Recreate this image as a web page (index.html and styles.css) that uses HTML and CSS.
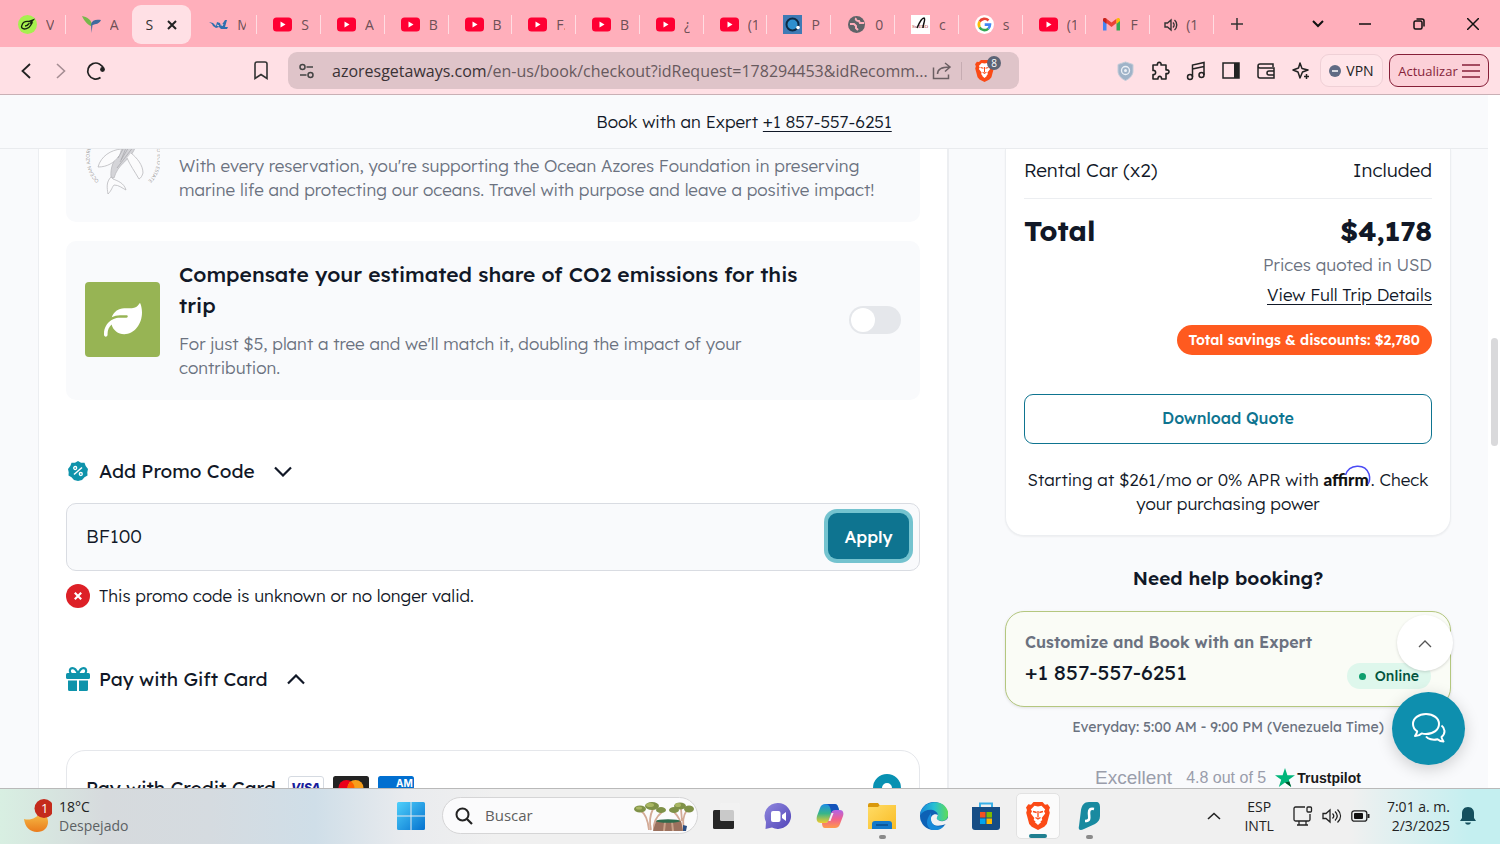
FILE: index.html
```html
<!DOCTYPE html>
<html lang="en">
<head>
<meta charset="utf-8">
<title>Checkout</title>
<link rel="stylesheet" href="styles.css">
</head>
<body>
<svg class="defs" aria-hidden="true">
  <defs>
    <symbol id="yt" viewBox="0 0 19 14"><rect width="19" height="14" rx="3.5" fill="#ff0033"/><path d="M7.5 4l5 3-5 3z" fill="#fff"/></symbol>
    <symbol id="brave" viewBox="0 0 24 28"><path d="M7.500 0h9l2.500 2.700 2.700-.4 2.300 3.200-1 2.500.8 2.800-3 11.200-2.500 2.800L12 28l-6.300-3.200L3.200 22 .2 10.800 1 8 0 5.500l2.300-3.200 2.700.4z" fill="#fb4a16"/><path d="M12 4.500l3.500-.7 3.700 3.700-1.200 1.800 1.200 2.200-3.500 4.500.6 2-4.300 3.500-4.300-3.500.6-2-3.500-4.500L6 9.300 4.800 7.500l3.700-3.700zM8.700 20l3.300-1.600 3.300 1.600-3.300 3z" fill="#fff"/><path d="M7 9.500l3.700 1M17 9.500l-3.700 1M12 9v6.500M9.500 15.500L12 17l2.500-1.500" stroke="#fb4a16" stroke-width="1.300" fill="none"/></symbol>
    <linearGradient id="win" x1="0" y1="0" x2="1" y2="1"><stop offset="0" stop-color="#4fd0fb"/><stop offset="1" stop-color="#0572cf"/></linearGradient>
    <linearGradient id="moon" x1="0" y1="0" x2="0" y2="1"><stop offset="0" stop-color="#f7c24a"/><stop offset="1" stop-color="#ea7b1c"/></linearGradient>
    <linearGradient id="edge1" x1="0" y1="0" x2="1" y2="0"><stop offset="0" stop-color="#1787d9"/><stop offset=".5" stop-color="#27c0d4"/><stop offset="1" stop-color="#5fdc57"/></linearGradient>
    <linearGradient id="cop1" x1="0" y1="0" x2="0" y2="1"><stop offset="0" stop-color="#1d8ee8"/><stop offset=".5" stop-color="#37b58a"/><stop offset="1" stop-color="#f3cc2c"/></linearGradient>
    <linearGradient id="cop2" x1="0" y1="0" x2="0" y2="1"><stop offset="0" stop-color="#b063e8"/><stop offset=".5" stop-color="#f0608e"/><stop offset="1" stop-color="#ff9b4a"/></linearGradient>
    <linearGradient id="fold" x1="0" y1="0" x2="1" y2="1"><stop offset="0" stop-color="#ffdc66"/><stop offset="1" stop-color="#f9bc25"/></linearGradient>
    <linearGradient id="chat" x1="0" y1="0" x2="1" y2="1"><stop offset="0" stop-color="#9088de"/><stop offset="1" stop-color="#5144b8"/></linearGradient>
  </defs>
</svg>

<header class="tabstrip">
  <div class="tabs" role="tablist">
    <div class="tab"><svg class="fav" viewBox="0 0 19 19"><circle cx="9.500" cy="9.500" r="9.500" fill="#a6f04e"/><path d="M4 10c1-3 4-4 7-3.500L15 5l-2.500 3 1.500 0-1.500 2.500C11 13.500 6 15 4 13c-1-1-.5-2 0-3zM7 11c2 0 3-1 4-2.500" stroke="#16240f" stroke-width="1.400" fill="none"/></svg><span class="tab-title">V</span></div>
    <div class="tab plain"><svg class="fav" viewBox="0 0 19 19"><path d="M0 1c5 1 9 4 9.500 7L9 11C6 10 2 6 0 1z" fill="#78b74a"/><path d="M19 5c-5-1-9 0-10 4l.5 9 1-8c3-1 7-1 8.500-5z" fill="#3f6a9e"/></svg><span class="tab-title">A</span></div>
    <div class="tab active"><span class="tab-title">S</span><button class="bare" aria-label="Close tab"><svg width="10" height="10" viewBox="0 0 10 10"><path d="M1 1l8 8M9 1L1 9" stroke="#222" stroke-width="2"/></svg></button></div>
    <div class="tab"><svg class="fav" viewBox="0 0 19 19"><path d="M0 7l4 1 3 3 1-4 3 1 1 3 4-6 2 0-2 7h3l-1 2h-6l-2-2-3 1-3-2-1-2z" fill="#2f6fae"/><path d="M8 10l2 1M13 11l1-2" stroke="#ffd5dc"/></svg><span class="tab-title">M</span></div>
    <div class="tab"><svg class="fav"><use href="#yt"/></svg><span class="tab-title">S</span></div>
    <div class="tab"><svg class="fav"><use href="#yt"/></svg><span class="tab-title">A</span></div>
    <div class="tab"><svg class="fav"><use href="#yt"/></svg><span class="tab-title">B</span></div>
    <div class="tab"><svg class="fav"><use href="#yt"/></svg><span class="tab-title">B</span></div>
    <div class="tab"><svg class="fav"><use href="#yt"/></svg><span class="tab-title">F.</span></div>
    <div class="tab"><svg class="fav"><use href="#yt"/></svg><span class="tab-title">B</span></div>
    <div class="tab"><svg class="fav"><use href="#yt"/></svg><span class="tab-title">¿</span></div>
    <div class="tab"><svg class="fav"><use href="#yt"/></svg><span class="tab-title">(1</span></div>
    <div class="tab"><svg class="fav" viewBox="0 0 19 19"><rect width="19" height="19" fill="#3f7ab5"/><circle cx="9.500" cy="9.500" r="6" fill="#2e8fce" stroke="#0d2a45" stroke-width="2"/><circle cx="15" cy="12.500" r="1.800" fill="#fff"/></svg><span class="tab-title">P</span></div>
    <div class="tab"><svg class="fav" viewBox="0 0 19 19"><circle cx="9.500" cy="9.500" r="8.500" fill="#5f6368"/><path d="M3 9h4l2 2v2l2 2M9 3c-1 2 1 3 3 3l1 2h4" stroke="#ffafbb" stroke-width="2" fill="none"/></svg><span class="tab-title">0</span></div>
    <div class="tab"><svg class="fav" viewBox="0 0 19 19"><rect width="19" height="19" fill="#fff"/><text x="1" y="13" class="scielo">SciELO</text><path d="M6 13C9 6 11 3 13 3c2 1-1 6-1 10" stroke="#111" stroke-width="1.500" fill="none"/></svg><span class="tab-title">c</span></div>
    <div class="tab"><svg class="fav" viewBox="0 0 19 19"><circle cx="9.500" cy="9.500" r="9.500" fill="#fff"/><g fill="none" stroke-width="2.600"><path d="M13.500 5.500A5.600 5.600 0 0 0 4.600 6.700" stroke="#ea4335"/><path d="M4.600 6.700a5.600 5.600 0 0 0 0 5.600" stroke="#fbbc05"/><path d="M4.600 12.300a5.600 5.600 0 0 0 8.700 1.300" stroke="#34a853"/><path d="M13.300 13.600a5.600 5.600 0 0 0 1.700-4H9.700" stroke="#4285f4"/></g></svg><span class="tab-title">s</span></div>
    <div class="tab"><svg class="fav"><use href="#yt"/></svg><span class="tab-title">(1</span></div>
    <div class="tab"><svg class="fav" viewBox="0 0 19 19"><path d="M1 5v10.500h3.500V8z" fill="#4285f4"/><path d="M18 5v10.500h-3.500V8z" fill="#34a853"/><path d="M1 5c0-2 2-2.500 3.500-1.300l5 3.800 5-3.800L14.500 8l-5 4-5-4z" fill="#ea4335"/><path d="M14.500 3.700C16 2.500 18 3 18 5v1l-3.500 3z" fill="#fbbc04"/><path d="M1 5c0-2 2-2.500 3.500-1.300V9L1 6z" fill="#c5221f"/></svg><span class="tab-title">F</span></div>
    <div class="tab sound"><svg class="spk" viewBox="0 0 14 14"><path d="M1 5h2.500L7 2v10L3.500 9H1z" fill="none" stroke="#333" stroke-width="1.400"/><path d="M9 4.500c1.500 1.500 1.500 3.500 0 5M10.500 2c3 2.500 3 7.500 0 10" fill="none" stroke="#333" stroke-width="1.400"/></svg><span class="tab-title">(1</span></div>
  </div>
  <div class="window-controls">
    <button class="bare newtab" aria-label="New tab"><svg width="14" height="14" viewBox="0 0 14 14"><path d="M7 1v12M1 7h12" stroke="#333" stroke-width="1.500"/></svg></button>
    <button class="bare search-tabs" aria-label="Search tabs"><svg width="12" height="8" viewBox="0 0 12 8"><path d="M1 1l5 5 5-5" stroke="#111" stroke-width="2" fill="none"/></svg></button>
    <button class="bare win" aria-label="Minimize"><svg width="12" height="12" viewBox="0 0 12 12"><path d="M0 6h12" stroke="#111" stroke-width="1.500"/></svg></button>
    <button class="bare win" aria-label="Restore"><svg width="12" height="12" viewBox="0 0 12 12"><rect x="1" y="3" width="8" height="8" rx="1.500" fill="none" stroke="#111" stroke-width="1.500"/><path d="M3.500 1H9a2 2 0 0 1 2 2v5.500" fill="none" stroke="#111" stroke-width="1.500"/></svg></button>
    <button class="bare win" aria-label="Close"><svg width="12" height="12" viewBox="0 0 12 12"><path d="M0 0l12 12M12 0L0 12" stroke="#111" stroke-width="1.500"/></svg></button>
  </div>
</header>

<nav class="toolbar">
  <button class="bare nav" aria-label="Back"><svg width="10" height="16" viewBox="0 0 10 16"><path d="M9 1L1.500 8 9 15" stroke="#222" stroke-width="1.800" fill="none"/></svg></button>
  <button class="bare nav" aria-label="Forward"><svg width="10" height="16" viewBox="0 0 10 16"><path d="M1 1l7.500 7L1 15" stroke="#a58d93" stroke-width="1.600" fill="none"/></svg></button>
  <button class="bare nav" aria-label="Reload"><svg width="20" height="20" viewBox="0 0 20 20"><path d="M14.500 16.500A8 8 0 1 1 17.500 8" stroke="#222" stroke-width="1.700" fill="none"/><circle cx="16.500" cy="8.500" r="2.400" fill="#222"/></svg></button>
  <button class="bare bookmark" aria-label="Bookmark"><svg width="14" height="19" viewBox="0 0 14 19"><path d="M1 3a2 2 0 0 1 2-2h8a2 2 0 0 1 2 2v14.500L7 13.500l-6 4z" stroke="#333" stroke-width="1.600" fill="none"/></svg></button>
  <div class="address">
    <svg width="16" height="16" viewBox="0 0 16 16" fill="none" stroke="#444" stroke-width="1.500"><circle cx="3.500" cy="4" r="2.500"/><path d="M7.500 4H14M1 12h6.500"/><circle cx="11.500" cy="12" r="2.500"/></svg>
    <span class="url"><b>azoresgetaways.com</b>/en-us/book/checkout?idRequest=178294453&amp;idRecomm...</span>
    <button class="bare" aria-label="Share"><svg width="20" height="18" viewBox="0 0 20 18" fill="none" stroke="#6b5f63" stroke-width="1.500"><path d="M1.500 5.500v11h15v-4M5.500 12c0-5 4-7 12-7M13 1l5 4-5 4.500"/></svg></button>
    <span class="address-line"></span>
    <button class="bare shield" aria-label="Brave Shields"><svg width="19" height="22"><use href="#brave"/></svg><span class="count">8</span></button>
  </div>
  <div class="extensions">
    <button class="bare ext" aria-label="Tracker guard"><svg width="17" height="20" viewBox="0 0 17 20"><path d="M8.500 1L16 3.500V10c0 4-3 7.500-7.500 9.500C4 17.500 1 14 1 10V3.500z" fill="#9fb3c8" stroke="#c3ccd8"/><circle cx="8.500" cy="9.500" r="4" fill="none" stroke="#edf1f6" stroke-width="1.300"/><circle cx="8.500" cy="9.500" r="1.500" fill="#edf1f6"/></svg></button>
    <button class="bare ext" aria-label="Extensions"><svg width="20" height="20" viewBox="0 0 20 20"><path d="M2 4h4.500c-1-3.500 4.500-3.500 3.500 0h5v5c4-1 4 4.500 0 3.500V18h-4.500c.5-3.500-4-3.500-3.500 0H2v-4.500c3.500 1 3.500-5 0-4z" fill="none" stroke="#222" stroke-width="1.600" stroke-linejoin="round"/></svg></button>
    <button class="bare ext" aria-label="Music"><svg width="20" height="20" viewBox="0 0 20 20" fill="none" stroke="#222" stroke-width="1.500"><circle cx="4" cy="16" r="2.500"/><circle cx="15.500" cy="14" r="2.500"/><path d="M6.500 16V4L18 1.500V14M6.500 8L18 5.500"/></svg></button>
    <button class="bare ext" aria-label="Side panel"><svg width="18" height="17" viewBox="0 0 18 17"><rect x="1" y="1" width="16" height="15" fill="none" stroke="#222" stroke-width="1.500"/><path d="M12 1h5v15h-5z" fill="#222"/></svg></button>
    <button class="bare ext" aria-label="Wallet"><svg width="18" height="18" viewBox="0 0 18 18" fill="none" stroke="#222" stroke-width="1.500"><path d="M16 5V2H3a2 2 0 0 0 0 4h14v10H3a2 2 0 0 1-2-2V4"/><path d="M17 9h-5a2 2 0 0 0 0 4h5"/></svg></button>
    <button class="bare ext" aria-label="Leo AI"><svg width="18" height="18" viewBox="0 0 18 18" fill="none" stroke="#222" stroke-width="1.500" stroke-linejoin="round"><path d="M8 1l2 5.500L16 8l-5.500 2L8 16l-2-6L1 8l5.500-2z"/><path d="M14.500 12v5M12 14.500h5"/></svg></button>
  </div>
  <button class="vpn"><svg width="12" height="12" viewBox="0 0 12 12"><circle cx="6" cy="6" r="6" fill="#5f6b84"/><path d="M3 6h6" stroke="#fff" stroke-width="1.500"/></svg>VPN</button>
  <button class="update">Actualizar<svg width="18" height="14" viewBox="0 0 18 14"><path d="M0 1h18M0 7h18M0 13h18" stroke="#861f38" stroke-width="1.600"/></svg></button>
</nav>

<div class="viewport">
  <div class="site">
    <div class="notice">Book with an Expert&nbsp;<a href="tel:+18575576251">+1 857-557-6251</a></div>
    <div class="scroll">
      <div class="columns">
        <main class="panel">
          <section class="addon first">
            <svg class="whale" width="75" height="75" viewBox="0 0 75 75">
              <path id="arcL" d="M14 61A34 34 0 0 1 14 14" fill="none"/><path id="arcR" d="M64 14A35 35 0 0 1 46 71" fill="none"/>
              <text><textPath href="#arcL">OCEAN AZORES</textPath></text>
              <text><textPath href="#arcR">BLANCO ECO ESTATE</textPath></text>
              <path d="M42 8c10 4 12 14 6 24-5 9-15 12-19 26l-3-1c-1-9 3-18 8-24 5-7 9-14 8-25z" fill="#d4d4d8" stroke="#b5b5b9" stroke-width=".7"/>
              <path d="M36 29c-10 1-20 7-23 18 9 0 16-4 21-11M46 33c6 5 12 12 12 20-1 3-2 5-4 6-4-7-9-14-12-21M26 57c-5 5-4 11-3 17 4-4 4-7 6-9 5 0 8 3 12 5-2-7-8-9-13-11z" fill="#fbfbfc" stroke="#b9b9bd" stroke-width=".8"/>
              <path d="M45 18l-9 22M48 20l-13 22M49 26l-17 22M42 22l-9 16" stroke="#a5a5a9" stroke-width=".7" fill="none"/>
            </svg>
            <div class="addon-body"><p>With every reservation, you're supporting the Ocean Azores Foundation in preserving marine life and protecting our oceans. Travel with purpose and leave a positive impact!</p></div>
          </section>

          <section class="addon">
            <div class="leaf"><svg width="38" height="38" viewBox="0 0 512 512"><path fill="#fff" d="M272 96c-78.600 0-145.100 51.500-167.700 122.500c33.600-17 71.500-26.500 111.700-26.500h88c8.800 0 16 7.200 16 16s-7.200 16-16 16H216c-16.600 0-32.700 1.900-48.200 5.400c-25.900 5.900-50 16.400-71.400 30.700C38.300 298.800 0 364.900 0 440v16c0 13.300 10.700 24 24 24s24-10.700 24-24V440c0-48.700 20.700-92.500 53.800-123.200C121.600 392.300 190.300 448 272 448l1 0c132.100-.7 239-130.900 239-291.400c0-42.600-7.500-83.100-21.100-119.600c-2.600-6.900-12.700-6.600-16.200-.1C455.900 72.100 418.700 96 376 96z"/></svg></div>
            <div class="addon-body">
              <h2><label for="co2">Compensate your estimated share of CO2 emissions for this trip</label></h2>
              <p>For just $5, plant a tree and we'll match it, doubling the impact of your contribution.</p>
            </div>
            <input class="switch" type="checkbox" role="switch" id="co2">
          </section>

          <button class="toggle-head promo-head" id="promo-label"><span class="head-icon"><svg width="20" height="20" viewBox="0 0 20 20"><path d="M10 0l3 1.700 3.500.1 1.200 3.200L20 8l-.7 3.200.2 3.300-3 1.700L14 19l-4 1-4-1-2.500-2.800-3-1.700.2-3.300L0 8l2.300-3 1.200-3.200L7 1.700z" fill="#0e93ab"/><path d="M6 13.500l8-7" stroke="#fff" stroke-width="1.500"/><g fill="none" stroke="#fff" stroke-width="1.300"><circle cx="7.200" cy="7" r="1.500"/><circle cx="12.800" cy="13" r="1.500"/></g></svg></span>Add Promo Code<svg class="caret" width="18" height="11" viewBox="0 0 18 11"><path d="M1 1.500l8 8 8-8" stroke="#111827" stroke-width="2.200" fill="none"/></svg></button>
          <div class="promo-field">
            <input type="text" value="BF100" aria-labelledby="promo-label">
            <button class="apply">Apply</button>
          </div>
          <p class="error"><svg width="24" height="24" viewBox="0 0 24 24"><circle cx="12" cy="12" r="12" fill="#dd2027"/><path d="M8.800 8.800l6.400 6.400M15.200 8.800l-6.400 6.400" stroke="#fff" stroke-width="2.200"/></svg>This promo code is unknown or no longer valid.</p>

          <button class="toggle-head gift-head"><span class="head-icon"><svg width="24" height="24" viewBox="0 0 24 24"><g fill="#0e93ab"><rect y="6" width="24" height="6" rx="1.500"/><path d="M2 13.500h9V24H3.500A1.500 1.500 0 0 1 2 22.500zM13 13.500h9v9a1.500 1.500 0 0 1-1.500 1.500H13z"/></g><path d="M12 7C10 2 8 1.200 6.500 1.200 3.500 1.200 3 5 5 6.500M12 7c2-5 4-5.800 5.500-5.800 3 0 3.500 3.800 1.500 5.300" stroke="#0e93ab" stroke-width="2.200" fill="none"/></svg></span>Pay with Gift Card<svg class="caret" width="18" height="11" viewBox="0 0 18 11"><path d="M1 9.500l8-8 8 8" stroke="#111827" stroke-width="2.200" fill="none"/></svg></button>

          <section class="method">
            <label for="credit">Pay with Credit Card</label>
            <svg width="36" height="24" viewBox="0 0 36 24"><rect x=".5" y=".5" width="35" height="23" rx="2.500" fill="#fff" stroke="#d5dae1"/><text x="3" y="16" class="visa">VISA</text></svg>
            <svg width="36" height="24" viewBox="0 0 36 24"><rect width="36" height="24" rx="2.500" fill="#232323"/><circle cx="13.500" cy="12" r="8" fill="#eb001b"/><circle cx="22.500" cy="12" r="8" fill="#f79e1b"/><path d="M18 5.400a8 8 0 0 1 0 13.200 8 8 0 0 1 0-13.200z" fill="#ff5f00"/></svg>
            <svg width="36" height="24" viewBox="0 0 36 24"><rect width="36" height="24" rx="2.500" fill="#016fd0"/><text x="18" y="11" class="amex">AM</text><text x="18" y="21" class="amex">EX</text></svg>
            <input class="radio" type="radio" name="method" id="credit" checked>
          </section>
        </main>

        <aside class="side">
          <section class="summary">
            <div class="line"><span>Rental Car (x2)</span><span>Included</span></div>
            <div class="total"><strong>Total</strong><strong>$4,178</strong></div>
            <div class="sub">Prices quoted in USD</div>
            <a class="details" href="#details">View Full Trip Details</a>
            <span class="savings">Total savings &amp; discounts: $2,780</span>
            <button class="download">Download Quote</button>
            <p class="affirm-note">Starting at $261/mo or 0% APR with <span class="affirm">affirm<svg width="28" height="22" viewBox="0 0 28 22"><path d="M1.500 10C5-1 21-2 25 9c1 3.500 1 7-1 10" stroke="#4a4af4" stroke-width="1.500" fill="none"/></svg></span>. Check your purchasing power</p>
          </section>
          <h3>Need help booking?</h3>
          <section class="expert">
            <div class="expert-title">Customize and Book with an Expert</div>
            <div class="expert-row"><span class="phone">+1 857-557-6251</span><span class="online"><i></i>Online</span></div>
          </section>
          <p class="hours">Everyday: 5:00 AM - 9:00 PM (Venezuela Time)</p>
          <div class="trust"><span class="rating">Excellent</span><span class="score">4.8 out of 5</span><span class="tp"><svg width="20" height="20" viewBox="0 0 20 20"><path d="M10 0l2.400 7.300H20l-6.200 4.500L16.200 19 10 14.600 3.800 19l2.400-7.200L0 7.300h7.600z" fill="#00b67a"/><path d="M10 14.600l4.300-1.200L16.200 19z" fill="#005128"/></svg>Trustpilot</span></div>
        </aside>
      </div>
    </div>
    <div class="floating">
      <button class="to-top" aria-label="Back to top"><svg width="14" height="9" viewBox="0 0 14 9"><path d="M1 8l6-6 6 6" stroke="#555" stroke-width="1.300" fill="none"/></svg></button>
      <button class="chat" aria-label="Chat"><svg width="36" height="34" viewBox="0 0 36 34" fill="none" stroke="#fff" stroke-width="2" stroke-linejoin="round"><path d="M15 2c7.500 0 13 4.400 13 10s-5.500 10-13 10c-1.500 0-3-.2-4.300-.6C9 23 7 24 4 24c1-1.500 2-3 2.200-4.600C3.600 17.600 2 15 2 12 2 6.400 7.500 2 15 2z"/><path d="M30.500 13.500c3.500 2.500 4.500 8 0 11.500.2 1.700 1 3 2 4.500-2.500 0-4.500-1-6-2.300C22 28.500 17 27 15 24.500"/></svg></button>
    </div>
  </div>
  <div class="scrollbar"><div class="thumb"></div></div>
</div>

<footer class="taskbar">
  <div class="weather">
    <svg width="30" height="34" viewBox="0 0 30 34"><path d="M2 20c6 2 13-1 17-7 10 3 10 20-4 20-7 0-12-5-13-13z" fill="url(#moon)"/><circle cx="22" cy="9.500" r="9.500" fill="#c42b1c"/><text x="19" y="14" class="badge-num">1</text></svg>
    <div><div>18°C</div><div class="muted">Despejado</div></div>
  </div>
  <div class="apps">
    <button class="bare app" aria-label="Start"><svg width="28" height="28" viewBox="0 0 28 28" fill="url(#win)"><path d="M0 1.500A1.500 1.500 0 0 1 1.500 0h12v13.500H0zM14.500 0h12A1.500 1.500 0 0 1 28 1.500v12H14.500zM0 14.500h13.500V28h-12A1.500 1.500 0 0 1 0 26.500zM14.500 14.500H28v12a1.500 1.500 0 0 1-1.500 1.500h-12z"/></svg></button>
    <div class="search">
      <svg width="18" height="18" viewBox="0 0 18 18"><circle cx="7.500" cy="7.500" r="6" fill="none" stroke="#222" stroke-width="2"/><path d="M12 12l5 5" stroke="#222" stroke-width="2.200"/></svg>
      <input type="text" placeholder="Buscar" aria-label="Buscar">
      <svg width="60" height="30" viewBox="0 0 60 30"><path d="M7 10c5 3 7 10 8 19M19 8c-3 6-4 13-2 21M28 11c-6 5-9 11-8 18M40 11c5 5 7 9 8 18M53 9c-5 7-4 13-3 20M47 8l1 12" stroke="#d3aa96" stroke-width="1.800" fill="none"/><g fill="#7f9148"><ellipse cx="6" cy="8" rx="6" ry="3.500"/><ellipse cx="18" cy="5" rx="7" ry="4"/><ellipse cx="27" cy="9" rx="5" ry="3"/><ellipse cx="40" cy="9" rx="5" ry="3"/><ellipse cx="46" cy="5" rx="6" ry="3.500"/><ellipse cx="55" cy="8" rx="5" ry="3.500"/></g><g fill="#a9b763"><ellipse cx="16" cy="4" rx="4" ry="2"/><ellipse cx="44" cy="4" rx="3" ry="2"/><ellipse cx="5" cy="7" rx="3" ry="1.500"/></g><path d="M22 20h25l2 10H19z" fill="#9b715e"/><path d="M31 21l-1 9M38 21l1 9" stroke="#caa28a" stroke-width="2"/><ellipse cx="34" cy="20" rx="12" ry="1.800" fill="#2f6b4c"/><path d="M49 24l4 1-1 5h-3z" fill="#2b4f83"/></svg>
    </div>
    <button class="bare app" aria-label="Task view"><svg width="28" height="28" viewBox="0 0 28 28"><rect x="1" y="8" width="21" height="19" rx="1.500" fill="#262626"/><rect x="8" y="1" width="20" height="18" rx="1.500" fill="#f3f3f3" fill-opacity=".8"/></svg></button>
    <button class="bare app" aria-label="Chat"><svg width="28" height="28" viewBox="0 0 28 28"><path d="M14 1a13 13 0 1 1-6 24.500L1.500 27 2 20A13 13 0 0 1 14 1z" fill="url(#chat)"/><rect x="7" y="9" width="9.500" height="11" rx="2" fill="#fff"/><path d="M18 13l4-3v9l-4-3z" fill="#fff"/></svg></button>
    <button class="bare app" aria-label="Copilot"><svg width="28" height="28" viewBox="0 0 28 28"><path d="M9 2h10c2 0 3 2 3.500 4l.5 2h-4c-2 0-3 2-4 6-1 4-2 7-5 7H5c-4 0-5-3-4-7L4 6c1-3 3-4 5-4z" fill="url(#cop1)"/><path d="M19 26H9c-2 0-3-2-3-5h4c2 0 3-3 4-7 1-4 2-6 5-6h5c3 0 4 3 3 6l-3 8c-1 3-3 4-5 4z" fill="url(#cop2)"/><path d="M9 2h10c2 0 3 2 4 6h-4c-2 0-3 1-4 3 0-4-1-9-6-9z" fill="#1453ba"/><path d="M15.500 11h2l-3 8h-2z" fill="#f0f1f2"/></svg></button>
    <button class="bare app open" aria-label="File Explorer"><svg width="28" height="28" viewBox="0 0 28 28"><path d="M0 3a2 2 0 0 1 2-2h8l3 4H0z" fill="#d9980c"/><path d="M0 5h10l2-2h16v24H0z" fill="url(#fold)"/><path d="M4 27v-5a3 3 0 0 1 3-3h14a3 3 0 0 1 3 3v5z" fill="#1479ca"/><path d="M8 23h12" stroke="#0b4d8a" stroke-width="1.500"/></svg></button>
    <button class="bare app" aria-label="Edge"><svg width="28" height="28" viewBox="0 0 28 28"><circle cx="14" cy="14" r="14" fill="#0d61b5"/><path d="M0 13C1 3 11-2 20 1c6 2 9 8 8 13-1 5-6 6-10 4-2-1-1-3 0-5-1-6-12-8-18 0z" fill="url(#edge1)"/><path d="M18 13c-4-2-8 1-7 6 1 5 7 6 15 3 2-2 2-4 2-6-3 4-7 4-10 2-2-1-1-3 0-5z" fill="#f0f1f2"/><path d="M11 17c0 6 6 9 13 7-2 3-7 5-12 4C6 26 5 18 11 11z" fill="#1789d8"/></svg></button>
    <button class="bare app" aria-label="Store"><svg width="28" height="28" viewBox="0 0 28 28"><path d="M8 7V1.500h12V7" stroke="#39b0e8" stroke-width="2" fill="none"/><path d="M0 5h28v20a3 3 0 0 1-3 3H3a3 3 0 0 1-3-3z" fill="#164d85"/><path d="M8 10h5.500v5.500H8z" fill="#f25022"/><path d="M14.500 10H20v5.500h-5.500z" fill="#7fba00"/><path d="M8 16.500h5.500V22H8z" fill="#00a4ef"/><path d="M14.500 16.500H20V22h-5.500z" fill="#ffb900"/></svg></button>
    <button class="bare app current" aria-label="Brave"><svg width="24" height="28"><use href="#brave"/></svg></button>
    <button class="bare app open" aria-label="Surfshark"><svg width="22" height="28" viewBox="0 0 22 28"><path d="M11 0h7c3 0 4 2 4 5v9c0 4-2 6-5 8L6 27c-4 2-6 1-5-3L3 8c1-5 3-8 8-8z" fill="#198aa0"/><path d="M16 7c-4-1-5 1-5 4 0 4 2 8-4 8" stroke="#fff" stroke-width="2.600" fill="none"/></svg></button>
  </div>
  <div class="tray">
    <svg width="14" height="8" viewBox="0 0 14 8"><path d="M1 7l6-5.500L13 7" stroke="#222" stroke-width="1.600" fill="none"/></svg>
    <div class="lang">ESP<br>INTL</div>
    <div class="status">
      <svg width="20" height="20" viewBox="0 0 20 20" fill="none" stroke="#222" stroke-width="1.300"><path d="M12 1H2.500A1.500 1.500 0 0 0 1 2.500v11A1.500 1.500 0 0 0 2.500 15h13a1.500 1.500 0 0 0 1.500-1.500V8M6 15v4M13 15v4M4 19h11"/><rect x="14" y="1" width="4.500" height="5" rx="1"/></svg>
      <svg width="20" height="16" viewBox="0 0 20 16" fill="none" stroke="#222" stroke-width="1.300"><path d="M1 5.500h3L8 2v12l-4-3.500H1z"/><path d="M10.500 5.500c1.500 1.500 1.500 3.500 0 5M13 3.500c3 3 3 6 0 9M15.500 1.500c4 4 4 9 0 13"/></svg>
      <svg width="19" height="12" viewBox="0 0 19 12"><rect x=".8" y=".8" width="15" height="10.400" rx="2.500" fill="none" stroke="#222" stroke-width="1.300"/><rect x="3" y="3" width="9" height="6" rx="1" fill="#111"/><path d="M17.500 4v4" stroke="#222" stroke-width="2"/></svg>
    </div>
    <div class="clock">7:01 a. m.<br>2/3/2025</div>
    <svg width="16" height="18" viewBox="0 0 16 18"><path d="M8 0c4 0 6 3 6 6v5l2 3H0l2-3V6c0-3 2-6 6-6zM5 15.500h6c-1 3-5 3-6 0z" fill="#15505e"/></svg>
  </div>
</footer>
</body>
</html>
```
FILE: styles.css
```css
* { box-sizing: border-box; }
body {
  margin: 0;
  height: 100vh;
  display: flex;
  flex-direction: column;
  overflow: hidden;
  font-family: "Open Sans", sans-serif;
  color: #222;
}
p, h2, h3 { margin: 0; }
svg { flex: none; display: block; }
button, input { font: inherit; color: inherit; }
.defs { position: absolute; width: 0; height: 0; }
.bare {
  border: 0;
  padding: 0;
  background: none;
  display: flex;
  align-items: center;
  justify-content: center;
}

/* Tab strip */
.tabstrip { display: flex; background: #ffafbb; height: 47px; flex: none; }
.tabs {
  display: grid;
  grid-auto-flow: column;
  grid-auto-columns: minmax(0, 1fr);
  flex: 1;
  min-width: 0;
  padding: 2px 0 0 2px;
  align-items: center;
}
.tab {
  height: 19px;
  display: flex;
  align-items: center;
  gap: 9px;
  padding: 0 11px 0 16px;
  border-right: 1px solid #ffdce2;
  font-size: 14px;
  color: #6e5056;
}
.fav { width: 19px; height: 19px; }
.spk { width: 14px; height: 14px; }
.tab-title { flex: none; max-width: 9px; overflow: hidden; white-space: nowrap; }
.tab.plain { border-color: transparent; }
.tab.sound { padding-left: 14px; gap: 8px; }
.tab.sound .tab-title { max-width: 14px; }
.tab.active {
  height: 39px;
  margin: 0 2px;
  border: 0;
  border-radius: 9px;
  background: #ffe0e5;
  padding: 0 14px;
  justify-content: space-between;
  color: #333;
}
.scielo { font: 5px "Liberation Serif", serif; fill: #b03030; }
.window-controls { display: flex; width: 286px; flex: none; }
.newtab { width: 46px; }
.search-tabs { width: 40px; margin-left: auto; }
.win { width: 54px; }

/* Toolbar */
.toolbar {
  display: flex;
  align-items: center;
  flex: none;
  height: 48px;
  padding: 0 11px 0 8px;
  background: #ffe0e5;
  border-bottom: 1px solid #c9b0b5;
}
.nav { width: 35px; height: 34px; }
.bookmark { width: 40px; height: 34px; margin: 0 7px 0 128px; }
.address {
  flex: 1;
  min-width: 0;
  display: flex;
  align-items: center;
  height: 37px;
  padding: 0 18px 0 11px;
  border-radius: 9px;
  background: #dfc4c9;
}
.url { flex: 1; min-width: 0; margin: 0 4px 0 17px; font-size: 16px; color: #67595d; white-space: nowrap; overflow: hidden; }
.url b { font-weight: 400; color: #3a3235; }
.address-line { width: 1px; height: 18px; background: #c6acb2; margin: 0 13px 0 9px; }
.shield { position: relative; width: 26px; justify-content: flex-start; }
.count {
  position: absolute;
  left: 12px;
  top: -4px;
  width: 14px;
  height: 14px;
  border-radius: 50%;
  background: #5d6475;
  color: #fff;
  font-size: 10px;
  line-height: 14px;
}
.extensions { display: flex; margin: 0 2px 0 89px; }
.ext { width: 35px; height: 34px; }
.vpn, .update {
  display: flex;
  align-items: center;
  justify-content: center;
  gap: 5px;
  height: 33px;
  padding: 0;
  border-radius: 9px;
  font-size: 14px;
}
.vpn { width: 63px; background: #ffe5e9; border: 1px solid #efd0d6; margin-right: 6px; }
.update { width: 100px; background: #fcd0d8; border: 1px solid #861f38; color: #861f38; font-size: 13px; gap: 4px; }

/* Web page */
.viewport {
  flex: 1;
  min-height: 0;
  display: flex;
  font-family: Lexend, Inter, sans-serif;
  font-weight: 300;
  color: #111827;
}
.site { position: relative; flex: 1; min-width: 0; display: flex; flex-direction: column; background: #f9fafc; }
.notice {
  flex: none;
  display: flex;
  justify-content: center;
  align-items: center;
  height: 54px;
  border-bottom: 1px solid #e9ebee;
  font-size: 17px;
}
.notice a { color: inherit; text-underline-offset: 3px; }
.scroll { flex: 1; min-height: 0; overflow: hidden; }
.columns {
  display: grid;
  grid-template-columns: minmax(0, 911fr) minmax(0, 446fr);
  gap: 56px;
  padding: 0 37px 0 38px;
}
.panel { background: #fff; border: solid #eceef1; border-width: 0 2px 0 1px; padding: 0 27px; }
.addon {
  display: flex;
  align-items: center;
  gap: 19px;
  padding: 18px 19px 20px;
  margin-bottom: 19px;
  border-radius: 10px;
  background: #f9fafc;
}
.addon.first { height: 130px; margin-top: -57px; align-items: flex-end; }
.whale { margin-bottom: 7px; }
.whale text { font-size: 5px; fill: #999; }
.leaf {
  flex: none;
  width: 75px;
  height: 75px;
  border-radius: 4px;
  background: #97b454;
  display: grid;
  place-items: center;
}
.addon-body { flex: 1; min-width: 0; }
.addon h2 { font-size: 21px; line-height: 31px; font-weight: 500; margin-bottom: 11px; }
.addon p { font-size: 17px; line-height: 24px; color: #6b7280; }
.switch {
  appearance: none;
  flex: none;
  width: 52px;
  height: 28px;
  margin: 0 0 0 11px;
  padding: 2px;
  border-radius: 14px;
  background: #e5e7eb;
}
.switch::before { content: ""; display: block; width: 24px; height: 24px; border-radius: 50%; background: #fff; }
.toggle-head {
  display: flex;
  align-items: center;
  gap: 9px;
  padding: 0;
  border: 0;
  background: none;
  font-size: 19px;
  line-height: 24px;
  font-weight: 400;
}
.head-icon { width: 24px; height: 24px; display: grid; place-items: center; }
.caret { margin-left: 10px; }
.promo-head { margin-top: 59px; }
.promo-field {
  display: flex;
  align-items: center;
  height: 68px;
  margin-top: 20px;
  padding: 0 10px 2px 19px;
  border: 1px solid #d9dce2;
  border-radius: 10px;
  background: #f9fafc;
}
.promo-field input { flex: 1; min-width: 0; border: 0; padding: 0; background: none; font-size: 19px; }
.apply {
  height: 46px;
  width: 81px;
  padding: 0;
  border: 0;
  border-radius: 9px;
  background: #0e7490;
  box-shadow: 0 0 0 4px #74c3cf;
  color: #fff;
  font-size: 17px;
  font-weight: 500;
}
.error { display: flex; align-items: center; gap: 9px; margin-top: 13px; font-size: 17px; line-height: 24px; }
.gift-head { margin-top: 59px; }
.method {
  display: flex;
  align-items: center;
  gap: 9px;
  height: 76px;
  margin-top: 59px;
  padding: 0 18px 0 19px;
  border: 1px solid #e5e7eb;
  border-radius: 19px;
}
.method label { font-size: 19px; font-weight: 400; margin-right: 3px; }
.visa { font: italic 800 12px Inter, sans-serif; fill: #1a1f9c; }
.amex { font: 700 10px Inter, sans-serif; fill: #fff; }
.radio {
  appearance: none;
  width: 28px;
  height: 28px;
  margin: 0 0 0 auto;
  border: 9px solid #0891b2;
  border-radius: 50%;
  background: #fff;
}

/* Booking summary */
.summary {
  display: flex;
  flex-direction: column;
  align-items: flex-end;
  padding: 0 18px 19px;
  border: 1px solid #eceef1;
  border-top: 0;
  border-radius: 0 0 19px 19px;
  background: #fff;
  box-shadow: 0 1px 2px #0000000d;
}
.line, .total { display: flex; justify-content: space-between; width: 100%; }
.line { padding: 8px 0 14px; border-bottom: 1px solid #eceef1; font-size: 19px; line-height: 27px; }
.total { margin-top: 14px; font-size: 28px; line-height: 36px; }
.total strong { font-weight: 700; }
.sub { margin-top: 4px; font-size: 17px; line-height: 24px; color: #6b7280; }
.details { margin-top: 6px; font-size: 17px; line-height: 24px; color: inherit; text-underline-offset: 3px; }
.savings {
  margin-top: 18px;
  padding: 0 12px;
  border-radius: 16px;
  background: #ff5a1f;
  color: #fff;
  font-size: 14px;
  line-height: 30px;
  font-weight: 600;
}
.download {
  width: 100%;
  height: 50px;
  margin-top: 39px;
  padding: 0 0 2px;
  border: 1px solid #0e7490;
  border-radius: 9px;
  background: #fff;
  color: #0e7490;
  font-size: 16px;
  font-weight: 500;
}
.affirm-note { width: 100%; margin-top: 24px; font-size: 17px; line-height: 24px; text-align: center; }
.affirm { position: relative; padding-right: 2px; font-family: Lato, sans-serif; font-weight: 900; color: #111; }
.affirm svg { position: absolute; right: -1px; top: -4px; }
.side h3 { margin-top: 29px; font-size: 19px; line-height: 27px; font-weight: 600; text-align: center; }
.expert {
  margin-top: 19px;
  padding: 17px 19px;
  border: 1px solid #b4c77f;
  border-radius: 19px;
  background: #fafcf6;
  box-shadow: 0 1px 3px #0000001a;
}
.expert-title { font-size: 16px; line-height: 26px; font-weight: 600; color: #6b7280; }
.expert-row { display: flex; justify-content: space-between; align-items: flex-end; }
.phone { font-size: 21px; line-height: 34px; font-weight: 400; }
.online {
  display: flex;
  align-items: center;
  gap: 9px;
  padding: 0 12px;
  border-radius: 13px;
  background: #def7ec;
  color: #03543f;
  font-size: 14px;
  line-height: 26px;
  font-weight: 500;
}
.online i { width: 7px; height: 7px; border-radius: 50%; background: #0e9f6e; }
.hours { margin-top: 10px; font-size: 14px; line-height: 21px; font-weight: 400; color: #6b7280; text-align: center; }
.trust { display: flex; justify-content: center; align-items: center; margin-top: 28px; font-family: "Liberation Sans", sans-serif; font-weight: 400; line-height: 24px; color: #9a9dab; }
.rating { font-size: 19px; }
.score { margin: 0 9px 0 14px; font-size: 16px; }
.tp { display: flex; align-items: center; gap: 2px; font-size: 14px; font-weight: 700; color: #191919; }
.floating {
  position: absolute;
  right: 23px;
  bottom: 23px;
  display: flex;
  flex-direction: column;
  align-items: center;
  gap: 21px;
}
.floating button { display: grid; place-items: center; border: 0; padding: 0; border-radius: 50%; }
.floating .to-top { width: 56px; height: 56px; background: #fff; box-shadow: 0 1px 3px #00000026; margin-right: 7px; }
.floating .chat { width: 73px; height: 73px; background: #0e8fae; box-shadow: 0 4px 16px #0000002e; }
.scrollbar { width: 12px; flex: none; background: #fff; padding: 243px 2px 0 3px; }
.thumb { height: 108px; border-radius: 4px; background: #d9d9db; }

/* Taskbar */
.taskbar {
  flex: none;
  height: 56px;
  display: grid;
  grid-template-columns: 1fr auto 1fr;
  align-items: center;
  padding-bottom: 2px;
  border-top: 1px solid #b9b9b9;
  background: linear-gradient(90deg, #d8efe2, #d6dadd 7%, #d5dbe0 14%, #cfdee8 21%, #e9ebee 27%, #f0f0f0 33%, #f0f0f0 90%, #c4eff0 98%);
  font-size: 14px;
  line-height: 19px;
  color: #222;
}
.weather { display: flex; align-items: center; gap: 7px; padding-left: 22px; }
.weather .muted { color: #5c6164; }
.badge-num { font: 13px "Open Sans", sans-serif; fill: #fff; }
.apps { display: flex; align-items: center; }
.app { position: relative; width: 52px; height: 46px; }
.search {
  display: flex;
  align-items: center;
  width: 256px;
  height: 37px;
  margin: 0 2px 0 5px;
  padding: 0 3px 0 12px;
  border: 1px solid #d5d5d6;
  border-radius: 19px;
  background: #fbfbfc;
}
.search input { flex: 1; min-width: 0; border: 0; padding: 0; margin-left: 12px; background: none; font-size: 15px; }
.search input::placeholder { color: #5f5f5f; }
.current { background: #fbfbfb; border: 1px solid #e2e2e2; border-radius: 5px; width: 44px; margin: 0 3px 0 4px; }
.open::after, .current::after {
  content: "";
  position: absolute;
  bottom: 0;
  width: 7px;
  height: 4px;
  border-radius: 2px;
  background: #8a8a8a;
}
.current::after { width: 18px; background: #1f7f90; }
.tray { display: flex; align-items: center; justify-content: flex-end; padding-right: 24px; text-align: center; }
.lang { margin: 0 19px 0 23px; }
.status { display: flex; align-items: center; gap: 9px; }
.clock { text-align: right; margin: 0 10px 0 17px; }
```
